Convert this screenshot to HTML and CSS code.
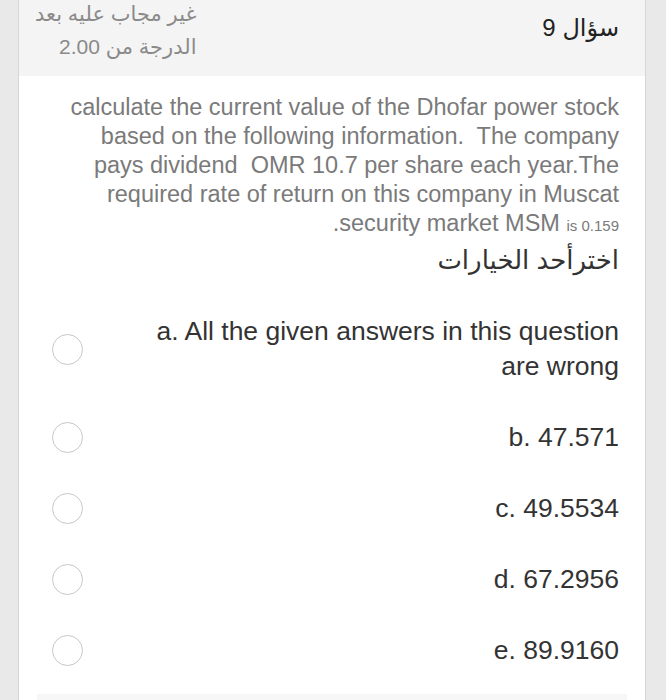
FILE: index.html
```html
<!DOCTYPE html>
<html>
  <head>
    <meta charset="utf-8">
    <title>سؤال 9</title>
    <link rel="stylesheet" href="styles.css">
  </head>
  <body>
    <div class="que" dir="rtl">
        <div class="info">
            <h3 class="no">سؤال <span class="qno">9</span></h3>
            <div class="state">
                <div>غير مجاب عليه بعد</div>
                <div>الدرجة من 2.00</div>
            </div>
        </div>
        <div class="content">
            <p class="qtext">calculate the current value of the Dhofar power stock based on the following information.&nbsp; The company pays dividend&nbsp; OMR 10.7 per share each year.The required rate of return on this company in Muscat security market MSM <span class="small">is 0.159</span>.</p>
            <div class="prompt">اخترأحد الخيارات</div>
            <div class="answer">
                <label class="opt"><span class="txt">a. All the given answers in this question are wrong</span><span class="radio"></span></label>
                <label class="opt"><span class="txt">b. 47.571</span><span class="radio"></span></label>
                <label class="opt"><span class="txt">c. 49.5534</span><span class="radio"></span></label>
                <label class="opt"><span class="txt">d. 67.2956</span><span class="radio"></span></label>
                <label class="opt"><span class="txt">e. 89.9160</span><span class="radio"></span></label>
            </div>
        </div>
        <div class="next"></div>
    </div>
  </body>
</html>
```

FILE: styles.css
```css
* {
    font-family: "Liberation Sans", "DejaVu Sans", sans-serif;
    box-sizing: border-box;
}

body {
    margin: 0;
    background-color: #e9e9e9;
}

.que {
    margin: 0 20px 0 18px;
    background-color: white;
    border-left: 1px solid #d6d6d6;
    border-right: 1px solid #d6d6d6;
    min-height: 700px;
}

.info {
    display: flex;
    justify-content: space-between;
    align-items: flex-start;
    height: 76px;
    padding: 0 26px 0 16px;
    background-color: #f4f4f4;
}

.no {
    margin: 13px 0 0 0;
    font-size: 24px;
    line-height: 30px;
    font-weight: normal;
    color: #222;
}

.state {
    margin-top: -3px;
    font-size: 21px;
    line-height: 33px;
    color: #8a8a8a;
}

.content {
    padding: 17px 26px 0 0;
}

.qtext {
    width: 560px;
    margin: 0 0 0 auto;
    font-size: 23.5px;
    line-height: 29px;
    color: #7a7a7a;
}

.small {
    font-size: 15px;
    line-height: 20px;
}

.prompt {
    margin-top: 7px;
    font-size: 26px;
    line-height: 30px;
    color: #333;
}

.answer {
    margin-top: 21px;
    padding-left: 33px;
}

.opt {
    display: flex;
    justify-content: space-between;
    align-items: center;
    padding: 18px 0 18px 0;
    cursor: pointer;
}

.txt {
    width: 480px;
    font-size: 26.5px;
    line-height: 35px;
    color: #333;
}

.radio {
    width: 31px;
    height: 31px;
    border: 1.5px solid #c8c8c8;
    border-radius: 50%;
}

.next {
    height: 20px;
    margin: 8px 18px 0 18px;
    background-color: #f7f7f7;
}
```
